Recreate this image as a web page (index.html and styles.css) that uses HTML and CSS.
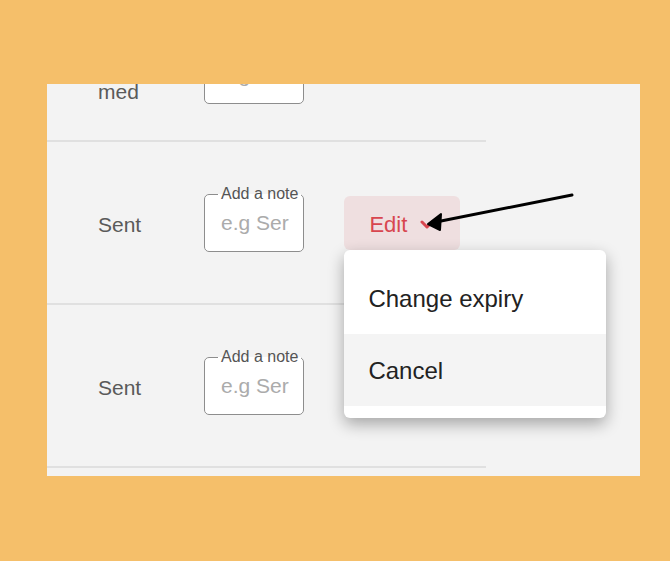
FILE: index.html
```html
<!DOCTYPE html>
<html>
<head>
	<meta charset="utf-8">
	<title>Order notes</title>
	<link rel="stylesheet" href="styles.css">
</head>
<body>
	<div class="panel">
		<div class="rows">
			<div class="row row-first">
				<div class="status">med</div>
				<fieldset class="note">
					<input type="text" placeholder="e.g Ser">
				</fieldset>
			</div>
			<div class="row">
				<div class="status">Sent</div>
				<fieldset class="note">
					<legend>Add a note</legend>
					<input type="text" placeholder="e.g Ser">
				</fieldset>
				<div class="edit-wrap">
					<button class="edit">
						Edit
						<svg width="14" height="10" viewBox="0 0 14 10"><polyline points="2,2 7,7 12,2" fill="none" stroke="#d8464f" stroke-width="3" stroke-linecap="round" stroke-linejoin="round"/></svg>
					</button>
					<ul class="menu">
						<li>Change expiry</li>
						<li class="active">Cancel</li>
					</ul>
				</div>
			</div>
			<div class="row">
				<div class="status">Sent</div>
				<fieldset class="note">
					<legend>Add a note</legend>
					<input type="text" placeholder="e.g Ser">
				</fieldset>
			</div>
		</div>
	</div>

	<!-- annotation arrow -->
	<svg class="pointer" width="670" height="561" viewBox="0 0 670 561">
		<line x1="572" y1="195" x2="436" y2="222" stroke="#000" stroke-width="3" stroke-linecap="round"/>
		<polygon points="428,224 441,214 440,230" fill="#000" stroke="#000" stroke-width="2" stroke-linejoin="round"/>
	</svg>
</body>
</html>
```

FILE: styles.css
```css
*{
	box-sizing: border-box;
	margin: 0;
	padding: 0;
	font-family: "Liberation Sans", Arial, sans-serif;
}
body{
	background: #f5bf6a;
	padding: 84px 30px 0 47px;
	height: 561px;
	overflow: hidden;
}
.panel{
	background: #f3f3f3;
	height: 392px;
	overflow: hidden;
}
.rows{
	width: 439px;
}
.row{
	height: 163px;
	display: flex;
	align-items: center;
	padding-left: 51px;
	border-bottom: 2px solid #e0e0e0;
}
.row-first{
	height: 58px;
	align-items: flex-end;
	padding-bottom: 28px;
}
.status{
	width: 106px;
	padding-top: 4px;
	font-size: 21px;
	line-height: 24px;
	color: #5a5a5a;
}
.row-first .status{
	padding-top: 0;
	line-height: 16px;
	margin-bottom: 12px;
}
.note{
	width: 100px;
	margin-bottom: 8px;
	border: 1px solid #8d8d8d;
	border-radius: 5px;
	background: #fff;
	padding: 0 2px 0 13px;
}
.note legend{
	font-size: 16px;
	line-height: 18px;
	color: #555;
	padding: 0 3px;
	white-space: nowrap;
}
.note input{
	display: block;
	width: 100%;
	height: 24px;
	margin: 8px 0 16px;
	padding-left: 3px;
	border: none;
	outline: none;
	background: transparent;
	font-size: 21px;
	color: #333;
}
.note input::placeholder{
	color: #ababab;
}
.edit-wrap{
	position: relative;
	margin-left: 40px;
}
.edit{
	width: 116px;
	height: 54px;
	display: flex;
	align-items: center;
	gap: 13px;
	padding: 4px 0 0 25px;
	border: none;
	border-radius: 6px;
	background: #efdfe0;
	color: #d8464f;
	font-size: 22px;
}
.edit svg{
	margin-top: 1px;
}
.menu{
	position: absolute;
	top: 100%;
	left: 0;
	width: 262px;
	list-style: none;
	background: #fff;
	border-radius: 6px;
	padding: 12px 0;
	box-shadow: 0 6px 16px rgba(0,0,0,0.32);
	z-index: 2;
}
.menu li{
	height: 72px;
	display: flex;
	align-items: center;
	padding: 2px 0 0 24px;
	font-size: 24px;
	color: #222;
}
.menu li.active{
	background: #f4f4f4;
}
.pointer{
	position: absolute;
	top: 0;
	left: 0;
	pointer-events: none;
	z-index: 3;
}
```
